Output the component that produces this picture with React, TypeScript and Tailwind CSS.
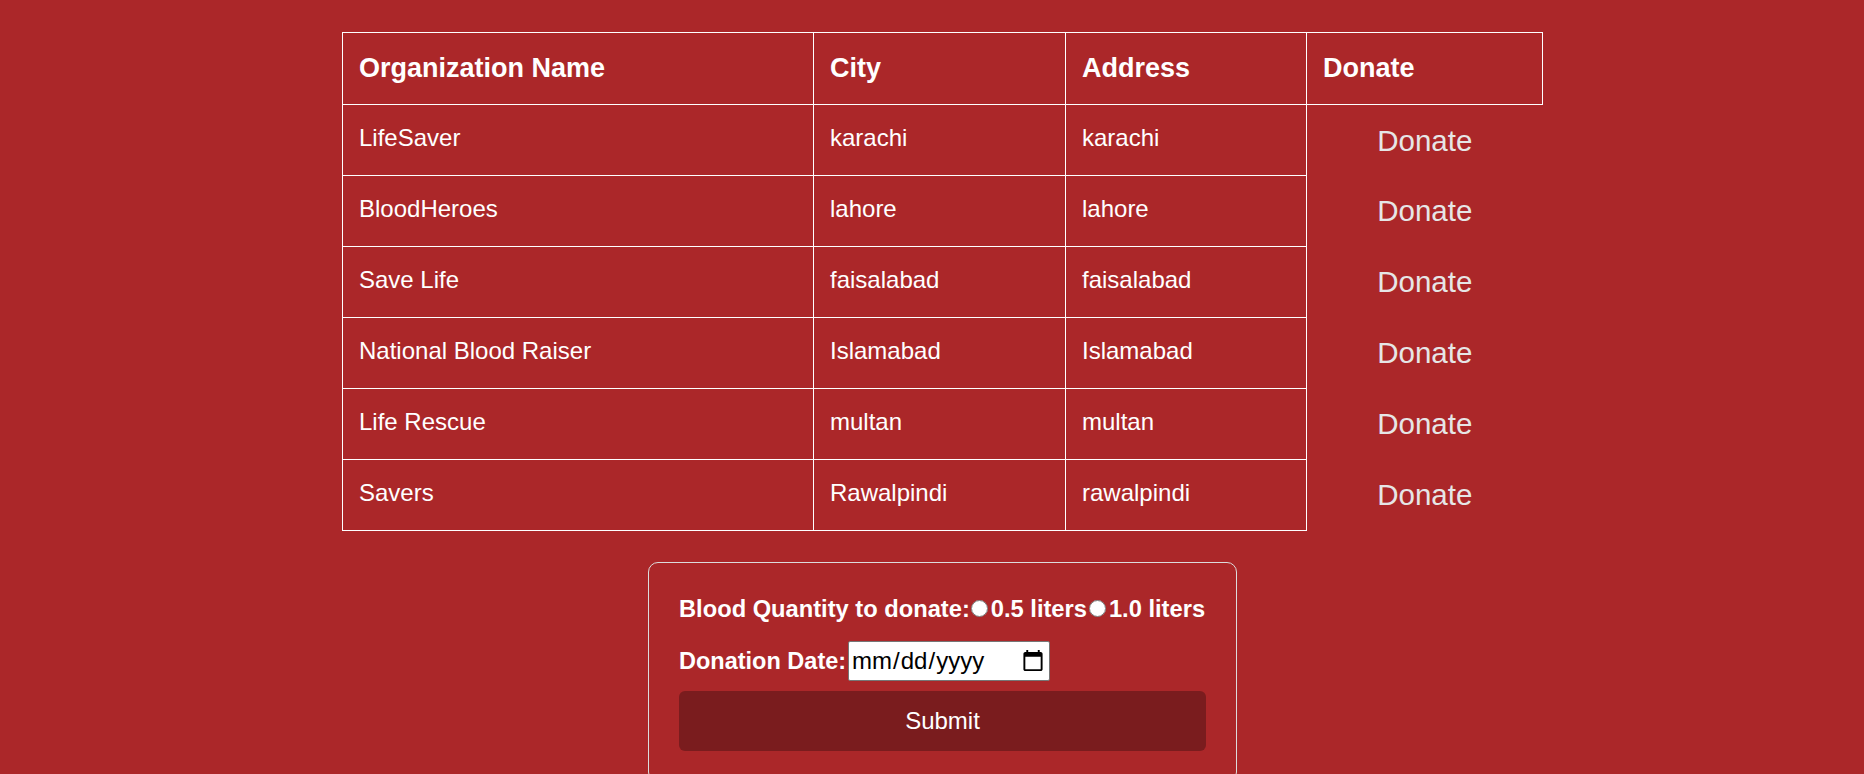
import React from "react";

const rows = [
  ["LifeSaver", "karachi", "karachi"],
  ["BloodHeroes", "lahore", "lahore"],
  ["Save Life", "faisalabad", "faisalabad"],
  ["National Blood Raiser", "Islamabad", "Islamabad"],
  ["Life Rescue", "multan", "multan"],
  ["Savers", "Rawalpindi", "rawalpindi"],
];

export default function App() {
  return (
    <div className="min-h-screen bg-[#ab2729] font-['Liberation_Sans',Arial,sans-serif] text-white">
      <div className="flex flex-col items-center pl-[21px] pt-[32px]">
        <table className="w-[1200px] table-fixed border-collapse">
          <colgroup>
            <col className="w-[471px]" />
            <col className="w-[252px]" />
            <col className="w-[241px]" />
            <col className="w-[236px]" />
          </colgroup>
          <thead>
            <tr>
              {["Organization Name", "City", "Address", "Donate"].map((h) => (
                <th
                  key={h}
                  className="h-[72px] border border-white pl-[16px] pr-[14px] text-left align-middle text-[27px] font-bold leading-normal"
                >
                  {h}
                </th>
              ))}
            </tr>
          </thead>
          <tbody>
            {rows.map((r, i) => (
              <tr key={i}>
                {r.map((c, j) => (
                  <td
                    key={j}
                    className="h-[71px] border border-white pl-[16px] pr-[14px] pb-[5px] align-middle text-[24px] leading-normal"
                  >
                    {c}
                  </td>
                ))}
                <td className="h-[71px] p-0 pt-[1px] text-center align-middle">
                  <button
                    type="button"
                    className="bg-transparent text-[29.5px] leading-normal text-[#e6e6e6]"
                  >
                    Donate
                  </button>
                </td>
              </tr>
            ))}
          </tbody>
        </table>

        <form className="mt-[31px] w-[589px] rounded-[10px] border border-[#dcdcdc] px-[30px] pb-[30px] pt-[33px]">
          <div className="whitespace-nowrap text-[23.7px] font-bold leading-[27px]">
            Blood Quantity to donate:
            <input
              type="radio"
              name="qty"
              className="m-0 ml-[1px] mr-[3px] h-[17px] w-[17px] align-baseline"
            />
            0.5 liters
            <input
              type="radio"
              name="qty"
              className="m-0 ml-[2px] mr-[3px] h-[17px] w-[17px] align-baseline"
            />
            1.0 liters
          </div>
          <div className="mt-[18px] flex items-baseline">
            <label className="whitespace-nowrap text-[23.5px] font-bold leading-[27px]">Donation Date:</label>
            <input
              type="date"
              className="ml-[2px] h-[40px] w-[202px] rounded-[2px] border border-[#767676] bg-white px-[2px] text-[24px] text-black"
            />
          </div>
          <button
            type="button"
            className="mt-[10px] h-[60px] w-full rounded-[6px] bg-[#7a1c1e] text-[24px] text-white"
          >
            Submit
          </button>
        </form>
      </div>
    </div>
  );
}
